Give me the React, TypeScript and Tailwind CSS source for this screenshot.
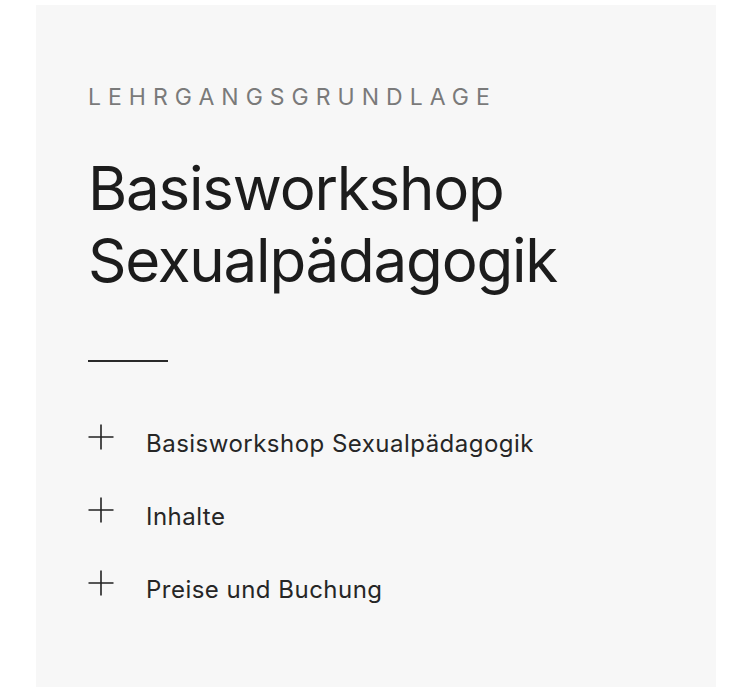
import React from 'react';

const sections = ['Basisworkshop Sexualpädagogik', 'Inhalte', 'Preise und Buchung'];

const PlusIcon: React.FC = () => (
  <svg width="26" height="26" viewBox="0 0 26 26" className="shrink-0" aria-hidden="true">
    <path d="M13 0.5V25.5M0.5 13H25.5" stroke="#222" strokeWidth="1.6" fill="none" />
  </svg>
);

const App: React.FC = () => {
  return (
    <div className="min-h-[688px] bg-white pt-[5px] font-['Inter','Liberation_Sans',sans-serif]">
      <div className="mx-[36px] h-[682px] bg-[#f7f7f7] pl-[52px] pt-[76px]">
        <p className="text-[23px] leading-[32px] tracking-[0.305em] text-[#7a7a7a]">LEHRGANGSGRUNDLAGE</p>

        <h1 className="mt-[39px] text-[60px] leading-[72px] tracking-[-0.02em] text-[#1c1c1c]">
          Basisworkshop
          <br />
          Sexualpädagogik
        </h1>

        <div className="mt-[64px] h-[1.5px] w-[80px] bg-[#2a2a2a]" />

        <ul className="mt-[62px] flex flex-col gap-[37px]">
          {sections.map((label) => (
            <li key={label} className="flex items-start gap-[32px] cursor-pointer">
              <PlusIcon />
              <span className="mt-[4px] text-[24px] leading-[32px] tracking-[0.02em] text-[#262626]">{label}</span>
            </li>
          ))}
        </ul>
      </div>
    </div>
  );
};

export default App;
